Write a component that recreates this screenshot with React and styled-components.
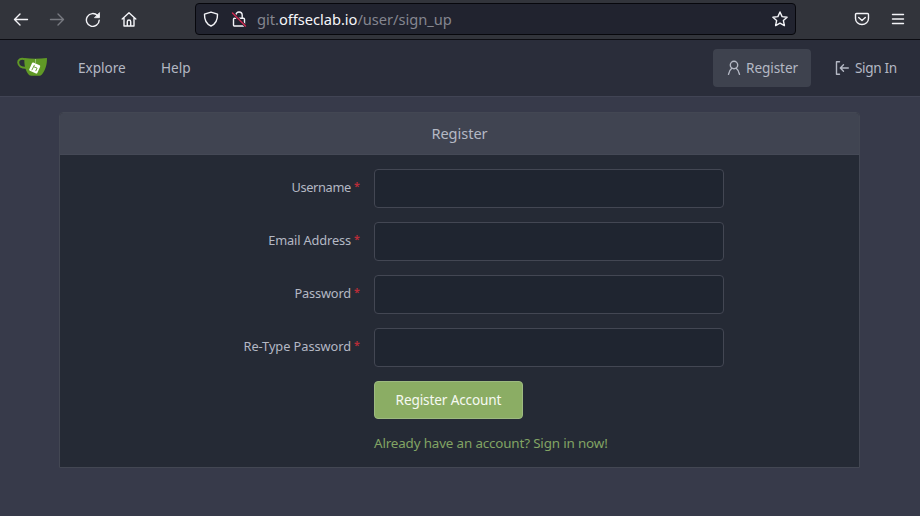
import React from "react";
import styled, { createGlobalStyle } from "styled-components";

const GlobalStyle = createGlobalStyle`
  * { box-sizing: border-box; }
  body {
    margin: 0;
    background: #373a4a;
    color: #b4b8c4;
    font-family: "Noto Sans", sans-serif;
    font-size: 14px;
  }
`;

const Page = styled.div`
  height: 516px;
  display: flex;
  flex-direction: column;
  overflow: hidden;
`;

const BrowserBar = styled.header`
  height: 40px;
  flex: none;
  display: flex;
  align-items: flex-start;
  background: #32343b;
  border-bottom: 1px solid #0c0c12;
`;

const BrowserButtons = styled.div`
  display: flex;
  width: 195px;
  padding: 11px 0 0 13px;
  gap: 20px;
`;

const Icon = styled.svg`
  width: 16px;
  height: 16px;
  flex: none;
  display: block;
  fill: none;
  stroke: ${(p) => p.$color || "#f4f4f8"};
  stroke-width: 1.4;
  stroke-linecap: round;
  stroke-linejoin: round;
`;

const AddressBar = styled.div`
  width: 601px;
  height: 32px;
  margin-top: 3px;
  padding: 0 7px;
  display: flex;
  align-items: center;
  background: #21232f;
  border: 1px solid #07070c;
  border-radius: 4px;
`;

const Lock = styled.div`
  margin-left: 12px;
`;

const Url = styled.span`
  flex: 1;
  margin-left: 10px;
  font-size: 14.67px;
  line-height: 20px;
  letter-spacing: -0.03px;
  color: #85868f;
`;

const Host = styled.span`
  color: #f6f6fa;
`;

const BrowserMenu = styled.div`
  display: flex;
  gap: 20px;
  padding: 11px 0 0 58px;
`;

const Navbar = styled.nav`
  height: 57px;
  flex: none;
  display: flex;
  align-items: center;
  padding: 0 9px 0 16px;
  background: #2a2d3a;
  border-bottom: 1px solid #414454;
`;

const Logo = styled.svg`
  width: 32px;
  height: 22px;
  display: block;
  margin: -3px 16px 0 0;
`;

const NavItem = styled.a`
  width: ${(p) => p.$width}px;
  height: 38px;
  display: flex;
  align-items: center;
  gap: ${(p) => p.$iconGap || 5}px;
  padding: 0 0 1px ${(p) => p.$inset || 14}px;
  margin-left: ${(p) => p.$gap || 0}px;
  border-radius: 4px;
  font-size: 13.6px;
  letter-spacing: ${(p) => p.$tracking || 0}px;
  line-height: 19px;
  white-space: nowrap;
  background: ${(p) => (p.$active ? "#3e424e" : "transparent")};
`;

const Spacer = styled.div`
  flex: 1;
`;

const Panel = styled.section`
  width: 801px;
  height: 356px;
  margin: 15px 0 0 59px;
  border: 1px solid #434753;
  border-radius: 4px 4px 0 0;
  background: #252a35;
  overflow: hidden;
`;

const PanelTitle = styled.h1`
  height: 42px;
  margin: 0;
  font-size: 14.6px;
  font-weight: 400;
  line-height: 40px;
  text-align: center;
  letter-spacing: -0.05px;
  background: #404451;
  border-bottom: 1px solid #454956;
`;

const Form = styled.div`
  display: flex;
  flex-direction: column;
  gap: 14px;
  padding-top: 14px;
`;

const Field = styled.div`
  display: grid;
  grid-template-columns: 300px 350px;
  column-gap: 14px;
`;

const Label = styled.label`
  height: 39px;
  display: flex;
  justify-content: flex-end;
  font-size: 12.8px;
  line-height: 37px;
  letter-spacing: ${(p) => p.$tracking || 0}px;
`;

const Required = styled.span`
  width: 6px;
  margin-left: 3px;
  font-family: "Open Sans", sans-serif;
  font-size: 10.5px;
  font-weight: 700;
  line-height: 34px;
  color: #b82c38;
`;

const Input = styled.input`
  width: 350px;
  height: 39px;
  padding: 0 14px;
  border: 1px solid #434753;
  border-radius: 4px;
  background: #1f2530;
  color: #bbc0ca;
  font: inherit;
  outline: none;
`;

const Actions = styled.div`
  display: flex;
  flex-direction: column;
  align-items: flex-start;
  margin-left: 314px;
`;

const Submit = styled.button`
  width: 149px;
  height: 38px;
  padding: 0 0 1px;
  border: 1px solid #9dba80;
  border-radius: 4px;
  background: #8bad64;
  color: #f6f9f2;
  font: inherit;
  font-size: 13.6px;
  white-space: nowrap;
  letter-spacing: -0.13px;
`;

const SignInLink = styled.a`
  margin-top: 14px;
  font-size: 13.4px;
  line-height: 20px;
  white-space: nowrap;
  letter-spacing: -0.15px;
  color: #82a464;
`;

const fields = [
  { label: "Username", type: "text", tracking: -0.33 },
  { label: "Email Address", type: "email", tracking: -0.14 },
  { label: "Password", type: "password", tracking: -0.16 },
  { label: "Re-Type Password", type: "password", tracking: -0.06 },
];

export default function App() {
  return (
    <Page>
      <GlobalStyle />
      <BrowserBar>
        <BrowserButtons>
          <Icon viewBox="0 0 16 16"><path d="M14.500 8.500H1.500M7 3 1.500 8.500 7 14" /></Icon>
          <Icon viewBox="0 0 16 16" $color="#777980"><path d="M1.500 8.500h13M9 3l5.500 5.500L9 14" /></Icon>
          <Icon viewBox="0 0 16 16"><path d="M14.200 9.200A6.400 6.400 0 1 1 12.500 4.600" /><path d="M14.500 2v4.700H9.800Z" fill="#f4f4f8" strokeWidth=".8" /></Icon>
          <Icon viewBox="0 0 16 16"><path d="M1.200 8 8 1.800 14.800 8M3 6.800V15h10V6.800M6.300 15v-4.300a1.700 1.700 0 0 1 3.400 0V15" /></Icon>
        </BrowserButtons>
        <AddressBar>
          <Icon viewBox="0 0 16 16"><path d="M8 1.200 14.500 3.200C14.700 9 12.500 13 8 15 3.500 13 1.300 9 1.500 3.200Z" /></Icon>
          <Lock>
            <Icon viewBox="0 0 16 16">
              <path d="M4.800 7V4.200a3.200 3.200 0 0 1 6.400 0V7M3.500 7.200h9a1 1 0 0 1 1 1V14a1 1 0 0 1-1 1h-9a1 1 0 0 1-1-1V8.200a1 1 0 0 1 1-1Z" />
              <path d="m1.500 2 13 13" stroke="#21232f" strokeWidth="2.600" />
              <path d="m1.500 2 13 13" stroke="#d02850" />
            </Icon>
          </Lock>
          <Url>git.<Host>offseclab.io</Host>/user/sign_up</Url>
          <Icon viewBox="0 0 16 16"><path d="m8 1 2.100 4.600 5 .6-3.700 3.400 1 5L8 12.100l-4.400 2.500 1-5L.9 6.200l5-.6Z" /></Icon>
        </AddressBar>
        <BrowserMenu>
          <Icon viewBox="0 0 16 16"><path d="M2.500 2.500h11a1 1 0 0 1 1 1V7.500a6.500 6 0 0 1-13 0v-4a1 1 0 0 1 1-1ZM4.700 6.500 8 9.500l3.300-3" /></Icon>
          <Icon viewBox="0 0 16 16"><path d="M2.500 3.500h11M2.500 8h11M2.500 12.500h11" /></Icon>
        </BrowserMenu>
      </BrowserBar>

      <Navbar>
        <Logo viewBox="0 0 32 22">
          <path d="M9 3.200C4.500 2 2 3.700 2.200 6.500c.2 3.500 3.500 5.500 8 5.300" fill="none" stroke="#609926" strokeWidth="2" />
          <path d="M8.500 2C16 3 24 2.700 30.900 2c.4 6-1.500 12-4.600 16-.8 1.200-1.800 1.800-3 1.800h-8c-1.500 0-2.500-.7-3.300-2C9.300 14 7.900 8 8.500 2Z" fill="#609926" />
          <path d="M19.500 3v4" stroke="#a8c98a" strokeWidth=".8" />
          <rect x="14.300" y="7.600" width="8.800" height="8.800" rx="1" fill="#fff" transform="rotate(24 18.700 12)" />
          <path d="m18.500 8.900-2.700 5.300M17.900 10.800l3.200 1.300-1.400 3" fill="none" stroke="#609926" strokeWidth=".9" />
        </Logo>
        <NavItem $width={75} $tracking={-0.02}>Explore</NavItem>
        <NavItem $width={58} $gap={8}>Help</NavItem>
        <Spacer />
        <NavItem $active $width={98} $inset={13} $iconGap={4} $tracking={-0.08}>
          <Icon viewBox="0 0 16 16" $color="#b4b8c4"><circle cx="8" cy="5" r="3.700" /><path d="M2.500 14.300C3 11.500 4 9.700 5.800 8.300M13.500 14.300C13 11.500 12 9.700 10.200 8.300" /></Icon>
          Register
        </NavItem>
        <NavItem $gap={9} $width={91} $tracking={-0.35}>
          <Icon viewBox="0 0 16 16" $color="#b4b8c4"><path d="M5.500 1.700H2.500v12.600h3M14.300 8H6.500M9.500 4.800 6.300 8l3.200 3.200" /></Icon>
          Sign In
        </NavItem>
      </Navbar>

      <Panel>
        <PanelTitle>Register</PanelTitle>
        <Form>
          {fields.map((f) => (
            <Field key={f.label}>
              <Label $tracking={f.tracking}>{f.label}<Required>*</Required></Label>
              <Input type={f.type} aria-label={f.label} />
            </Field>
          ))}
          <Actions>
            <Submit>Register Account</Submit>
            <SignInLink>Already have an account? Sign in now!</SignInLink>
          </Actions>
        </Form>
      </Panel>
    </Page>
  );
}
